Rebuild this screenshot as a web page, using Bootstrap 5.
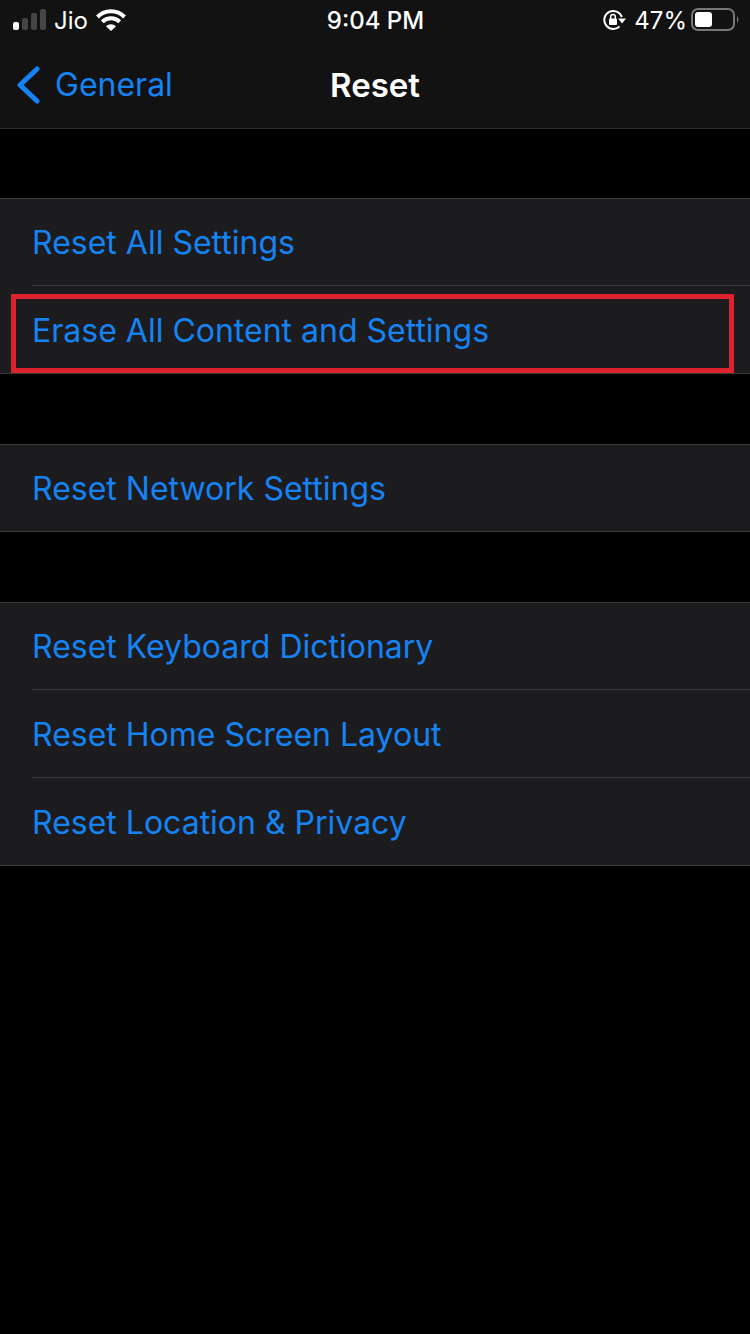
<!DOCTYPE html>
<html lang="en" data-bs-theme="dark">
<head>
<meta charset="utf-8">
<meta name="viewport" content="width=device-width, initial-scale=1">
<title>Reset</title>
<link href="https://cdn.jsdelivr.net/npm/bootstrap@5.3.0/dist/css/bootstrap.min.css" rel="stylesheet">
<style>
body{background:#000;color:#fff;font-family:Inter,"Liberation Sans",sans-serif}
.top-area{background:#121212;border-bottom:1px solid #2c2c2e}
.status-row{padding:0 11px 0 12px;font-size:24px;line-height:42px}
.status-row svg{flex:none;margin-bottom:2px}
.clock{font-weight:500}
.side{flex:1 1 0}
.nav-row{padding:0 17px;font-size:32px;line-height:86px}
.nav-row h1{font-size:33px;line-height:86px;font-weight:600}
.ios-link{color:#1583f3;text-decoration:none}
.back-link{gap:15px}
.groups{gap:70px;padding-top:69px}
.settings{background:#1c1c1e;border-top:1px solid #3a3a3c;border-bottom:1px solid #3a3a3c;padding-left:32px}
.settings button{display:block;width:100%;padding:2px 0 0;border:0;background:none;color:#1583f3;font-size:32px;line-height:84px;text-align:left}
.settings button+button{border-top:1px solid #3a3a3c;line-height:85px}
.marked{position:relative}
.marked::after{content:"";position:absolute;left:-21px;right:16px;top:8px;bottom:0;border:5px solid #dc222c}
</style>
</head>
<body>
<header class="top-area">
<div class="status-row d-flex align-items-center">
<div class="side d-flex align-items-center gap-2">
<svg width="34" height="22" viewBox="0 0 34 22" aria-hidden="true"><rect x="1" y="13" width="6" height="8" rx="2" fill="#fff"/><g fill="#454545"><rect x="10" y="9" width="6" height="12" rx="2"/><rect x="19" y="4" width="6" height="17" rx="2"/><rect x="28" width="6" height="21" rx="2"/></g></svg>
<span>Jio</span>
<svg width="30" height="22" viewBox="0 0 30 22" aria-hidden="true"><g fill="none" stroke="#fff" stroke-width="4"><path d="M1.500 8A19 19 0 0 1 28.500 8"/><path d="M6.300 12.900A12.300 12.300 0 0 1 23.700 12.900"/></g><path d="M10 17.300A7 7 0 0 1 20 17.300L15 22Z" fill="#fff"/></svg>
</div>
<span class="clock">9:04 PM</span>
<div class="side d-flex align-items-center justify-content-end">
<svg class="me-2" width="24" height="22" viewBox="0 0 24 22" aria-hidden="true"><path d="M19.800 8A9 9 0 1 0 17.500 17.500" fill="none" stroke="#fff" stroke-width="2"/><path d="M16.200 9.500H24L20 14.500Z" fill="#fff"/><rect x="7" y="9.500" width="8" height="6.500" rx="1" fill="#fff"/><path d="M8.700 10V7.800A2.300 2.300 0 0 1 13.300 7.800V10" fill="none" stroke="#fff" stroke-width="1.500"/></svg>
<span>47%</span>
<svg class="ms-1" width="48" height="24" viewBox="0 0 48 24" aria-hidden="true"><rect x="1" y="1" width="42" height="21" rx="6" fill="none" stroke="#777" stroke-width="2"/><rect x="4" y="4" width="17" height="15" rx="3" fill="#fff"/><path d="M46 8Q49 11.500 46 15Z" fill="#777"/></svg>
</div>
</div>
<nav class="nav-row d-flex align-items-center">
<div class="side d-flex"><a class="ios-link back-link d-flex align-items-center" href="#"><svg width="23" height="38" viewBox="0 0 23 38" aria-hidden="true"><path d="M20 3L3 19L20 35" fill="none" stroke="#1583f3" stroke-width="5" stroke-linecap="round" stroke-linejoin="round"/></svg>General</a></div>
<h1 class="m-0">Reset</h1>
<div class="side"></div>
</nav>
</header>
<main class="groups d-flex flex-column">
<section class="settings"><button type="button">Reset All Settings</button><button type="button" class="marked">Erase All Content and Settings</button></section>
<section class="settings"><button type="button">Reset Network Settings</button></section>
<section class="settings"><button type="button">Reset Keyboard Dictionary</button><button type="button">Reset Home Screen Layout</button><button type="button">Reset Location &amp; Privacy</button></section>
</main>
<script src="https://cdn.jsdelivr.net/npm/bootstrap@5.3.0/dist/js/bootstrap.bundle.min.js"></script>
</body>
</html>
